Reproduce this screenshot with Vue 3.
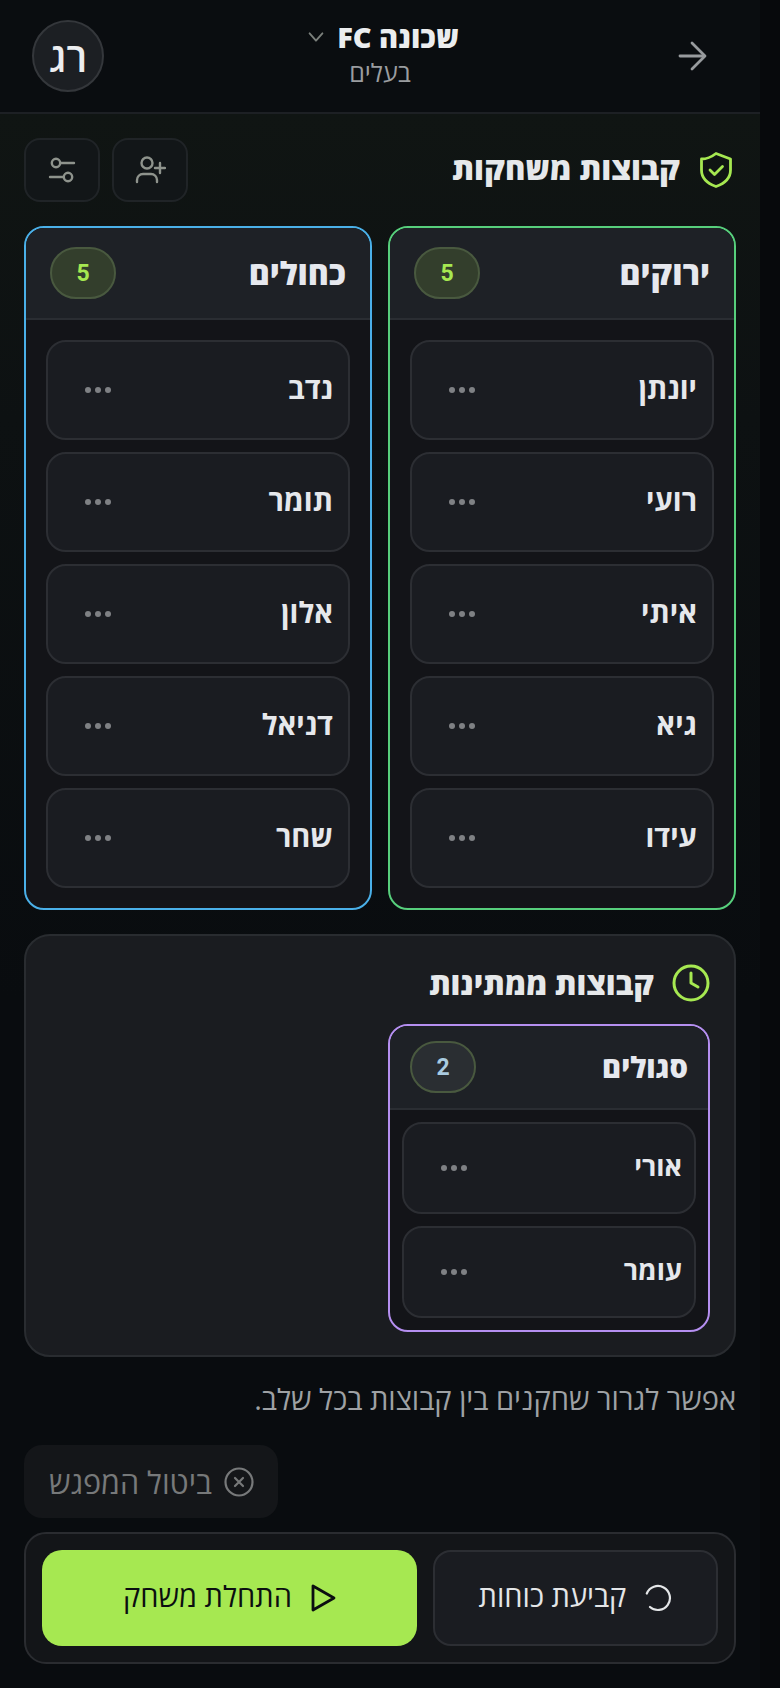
<template>
  <div class="page">
    <div class="screen" dir="rtl">
      <header class="topbar">
        <button class="back">
          <svg width="32" height="32" viewBox="0 0 32 32" fill="none" stroke="currentColor" stroke-width="2.800" stroke-linecap="round" stroke-linejoin="round"><path d="M4 16h24" /><path d="M16 3l13 13-13 13" /></svg>
        </button>
        <div class="club">
          <div class="club-name">
            <span>שכונה FC</span>
            <svg width="22" height="22" viewBox="0 0 24 24" fill="none" stroke="#7b807c" stroke-width="2" stroke-linecap="round" stroke-linejoin="round"><path d="m5 8 7 8 7-8" /></svg>
          </div>
          <div class="club-role">בעלים</div>
        </div>
        <div class="avatar">רג</div>
      </header>

      <main class="content">
        <div class="section-head">
          <div class="section-title">
            <svg width="36" height="40" viewBox="0 0 36 40" fill="none" stroke="#a6e851" stroke-width="2.800" stroke-linecap="round" stroke-linejoin="round"><path d="M18 3.500 32.500 9v11c0 8-6 13.500-14.500 16.500C9.500 33.500 3.500 28 3.500 20V9c5 0 10-2 14.500-5.500z" /><path d="m12 20 4.500 4.500 8-8" /></svg>
            <h2>קבוצות משחקות</h2>
          </div>
          <div class="tools">
            <button class="tool">
              <svg width="32" height="30" viewBox="0 0 32 30" fill="none" stroke="#8e938c" stroke-width="2.400" stroke-linecap="round" stroke-linejoin="round"><circle cx="13" cy="8" r="5.500" /><path d="M3 27v-2a6 6 0 0 1 6-6h8a6 6 0 0 1 6 6v2" /><path d="M26 8v10M21 13h10" /></svg>
            </button>
            <button class="tool">
              <svg width="28" height="28" viewBox="0 0 28 28" fill="none" stroke="#8e938c" stroke-width="2.400" stroke-linecap="round" stroke-linejoin="round"><circle cx="8" cy="7" r="4.200" /><path d="M12.500 7H26" /><circle cx="20" cy="21" r="4.200" /><path d="M15.500 21H2" /></svg>
            </button>
          </div>
        </div>

        <div class="teams">
          <section v-for="team in activeTeams" :key="team.name" class="team" :class="team.color">
            <div class="team-head">
              <h3>{{ team.name }}</h3>
              <span class="count">{{ team.players.length }}</span>
            </div>
            <div class="team-body">
              <div v-for="p in team.players" :key="p" class="player">
                <span class="name">{{ p }}</span>
                <span class="dots"><i></i><i></i><i></i></span>
              </div>
            </div>
          </section>
        </div>

        <section class="waiting">
          <div class="waiting-title">
            <svg width="38" height="38" viewBox="0 0 38 38" fill="none" stroke="#a6e851" stroke-width="3" stroke-linecap="round" stroke-linejoin="round"><circle cx="19" cy="19" r="17" /><path d="M19 9v10l7 4" /></svg>
            <h2>קבוצות ממתינות</h2>
          </div>
          <div class="waiting-grid">
            <section class="team small purple">
              <div class="team-head">
                <h3>סגולים</h3>
                <span class="count muted">2</span>
              </div>
              <div class="team-body">
                <div v-for="p in waitingPlayers" :key="p" class="player">
                  <span class="name">{{ p }}</span>
                  <span class="dots"><i></i><i></i><i></i></span>
                </div>
              </div>
            </section>
          </div>
        </section>

        <p class="hint">אפשר לגרור שחקנים בין קבוצות בכל שלב.</p>

        <button class="cancel">
          <svg width="30" height="30" viewBox="0 0 30 30" fill="none" stroke="#77797a" stroke-width="2.200" stroke-linecap="round"><circle cx="15" cy="15" r="13.500" /><path d="m11 11 8 8M19 11l-8 8" /></svg>
          <span>ביטול המפגש</span>
        </button>

        <div class="actions">
          <button class="balance">
            <svg width="28" height="28" viewBox="0 0 28 28" fill="none" stroke="#e4e6e8" stroke-width="2.200" stroke-linecap="round"><path d="M2.800 9.500A12 12 0 1 1 6 23" /></svg>
            <span>קביעת כוחות</span>
          </button>
          <button class="start">
            <svg width="26" height="30" viewBox="0 0 26 30" fill="none" stroke="#0b0e10" stroke-width="2.800" stroke-linejoin="round"><path d="M3 3v24l21-12z" /></svg>
            <span>התחלת משחק</span>
          </button>
        </div>
      </main>
    </div>
  </div>
</template>

<script setup>
const activeTeams = [
  { name: 'ירוקים', color: 'green', players: ['יונתן', 'רועי', 'איתי', 'גיא', 'עידו'] },
  { name: 'כחולים', color: 'blue', players: ['נדב', 'תומר', 'אלון', 'דניאל', 'שחר'] }
]

const waitingPlayers = ['אורי', 'עומר']
</script>

<style>
html, body {
  margin: 0;
  background: #07090c;
}
</style>

<style scoped>
.page {
  width: 780px;
  height: 1688px;
  overflow: hidden;
  background: #07090c;
  font-family: "Open Sans", "Liberation Sans", sans-serif;
  color: #e6e8ec;
}

.screen {
  width: 760px;
  height: 1688px;
  background: linear-gradient(180deg, #0a0d10 0, #0a0d10 113px, #101513 114px, #0d1112 420px, #090c0f 1000px, #090c0f 100%);
}

button {
  font-family: inherit;
  cursor: pointer;
}

h2, h3, p {
  margin: 0;
}

.topbar {
  height: 112px;
  box-sizing: content-box;
  border-bottom: 2px solid #1d2024;
  padding: 0 32px;
  display: flex;
  align-items: center;
  justify-content: space-between;
  background: #0a0d10;
}

.back {
  width: 72px;
  height: 72px;
  padding: 0;
  background: none;
  border: none;
  color: #989b9e;
  display: flex;
  align-items: center;
  justify-content: center;
}

.club {
  text-align: center;
  margin-top: -4px;
}

.club-name {
  display: flex;
  align-items: center;
  gap: 10px;
  margin-right: -4px;
  font-size: 29px;
  font-weight: 800;
  line-height: 36px;
  color: #ebedef;
}

.club-role {
  font-size: 25px;
  line-height: 34px;
  color: #9a9da0;
}

.avatar {
  width: 72px;
  height: 72px;
  box-sizing: border-box;
  border-radius: 50%;
  background: #1c1f23;
  border: 2px solid #34373b;
  display: flex;
  align-items: center;
  justify-content: center;
  font-size: 40px;
  font-weight: 600;
  color: #eceef0;
}

.content {
  padding: 24px 24px 0;
}

.section-head {
  display: flex;
  align-items: center;
  justify-content: space-between;
  height: 64px;
}

.section-title,
.waiting-title {
  display: flex;
  align-items: center;
  gap: 18px;
}

.section-title {
  padding-right: 2px;
}

.section-title h2,
.waiting-title h2 {
  font-size: 31px;
  font-weight: 800;
  line-height: 38px;
  color: #e6e8ea;
}

.section-title h2 {
  padding-bottom: 4px;
}

.waiting-title h2 {
  font-size: 30.500px;
}

.tools {
  display: flex;
  gap: 12px;
}

.tool {
  width: 76px;
  height: 64px;
  padding: 0;
  border-radius: 16px;
  background: #121618;
  border: 2px solid #202427;
  display: flex;
  align-items: center;
  justify-content: center;
}

.teams {
  display: grid;
  grid-template-columns: 1fr 1fr;
  gap: 16px;
  margin-top: 24px;
}

.team {
  border: 2px solid #333;
  border-radius: 20px;
  overflow: hidden;
  background: #131418;
}

.team.green { border-color: #57cf7c; }
.team.blue { border-color: #4ab0e8; }
.team.purple { border-color: #b58ff0; }

.team-head {
  height: 92px;
  box-sizing: border-box;
  padding: 0 24px;
  display: flex;
  align-items: center;
  justify-content: space-between;
  background: #1e2126;
  border-bottom: 2px solid #2a2d32;
}

.team-head h3 {
  font-size: 32px;
  font-weight: 800;
  line-height: 40px;
  color: #e6e8ee;
}

.count {
  width: 66px;
  height: 52px;
  box-sizing: border-box;
  border-radius: 26px;
  border: 2px solid #49593f;
  background: #333e2c;
  color: #a6e851;
  font-family: Roboto, sans-serif;
  font-size: 23px;
  font-weight: 700;
  display: flex;
  align-items: center;
  justify-content: center;
}

.count.muted {
  background: #2a2e32;
  color: #a9cbe0;
}

.team-body {
  padding: 20px;
  display: flex;
  flex-direction: column;
  gap: 12px;
}

.player {
  height: 100px;
  box-sizing: border-box;
  padding: 0 15px 0 0;
  border-radius: 20px;
  border: 2px solid #2c2e33;
  background: #1a1c21;
  display: flex;
  align-items: center;
  justify-content: space-between;
  font-size: 29px;
  font-weight: 700;
  color: #e6e8ec;
}

.name {
  padding-bottom: 5px;
}

.dots {
  display: flex;
  gap: 4px;
  margin-left: 37px;
}

.dots i {
  width: 6px;
  height: 6px;
  border-radius: 50%;
  background: #7f8184;
}

.waiting {
  margin-top: 24px;
  height: 423px;
  box-sizing: border-box;
  padding: 28px 24px 24px;
  border: 2px solid #292c30;
  border-radius: 26px;
  background: #1a1c20;
}

.waiting-grid {
  display: grid;
  grid-template-columns: 322px;
  margin-top: 22px;
}

.team.small .team-head {
  height: 84px;
  padding: 0 20px;
}

.team.small .team-head h3 {
  font-size: 29px;
}

.team.small .team-body {
  padding: 12px;
  gap: 12px;
}

.team.small .player {
  height: 92px;
  padding-right: 12px;
  font-size: 27px;
}

.hint {
  margin-top: 24px;
  font-size: 29px;
  line-height: 36px;
  color: #9ea1a4;
}

.cancel {
  margin-top: 28px;
  margin-left: 0;
  margin-right: auto;
  width: 254px;
  height: 73px;
  padding: 0 24px 0 0;
  border: none;
  border-radius: 18px;
  background: #141619;
  color: #77797a;
  font-size: 30.500px;
  display: flex;
  align-items: center;
  gap: 12px;
  white-space: nowrap;
}

.actions {
  margin-top: 14px;
  height: 132px;
  box-sizing: border-box;
  padding: 16px;
  border: 2px solid #2a2c30;
  border-radius: 22px;
  background: #131518;
  display: grid;
  grid-template-columns: 285px 1fr;
  gap: 16px;
}

.balance,
.start {
  display: flex;
  align-items: center;
  justify-content: center;
  gap: 18px;
  font-size: 29px;
}

.balance span,
.start span {
  padding-bottom: 5px;
}

.balance {
  border: 2px solid #2c2e33;
  border-radius: 18px;
  background: #1a1c21;
  color: #e4e6e8;
}

.start {
  border: none;
  border-radius: 20px;
  background: #a6e851;
  color: #0b0e10;
  font-weight: 500;
}
</style>
